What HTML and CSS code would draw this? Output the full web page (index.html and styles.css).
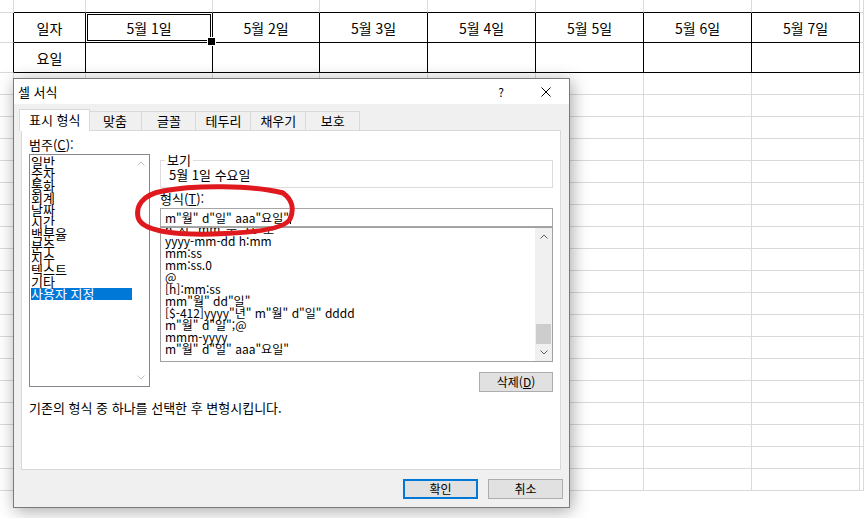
FILE: index.html
```html
<!DOCTYPE html>
<html lang="ko">
<head>
<meta charset="utf-8">
<title>셀 서식</title>
<link rel="stylesheet" href="styles.css">
</head>
<body>
<div class="sheet">
  <span></span><span class="tb"></span><span class="tb"></span><span class="tb"></span><span class="tb"></span><span class="tb"></span><span class="tb"></span><span class="tb"></span><span class="tb"></span><span></span>
  <span class="lb"></span><span class="d">일자</span><span class="d act">5월 1일</span><span class="d">5월 2일</span><span class="d">5월 3일</span><span class="d">5월 4일</span><span class="d">5월 5일</span><span class="d">5월 6일</span><span class="d">5월 7일</span><span></span>
  <span class="lb"></span><span class="d">요일</span><span class="d"></span><span class="d"></span><span class="d"></span><span class="d"></span><span class="d"></span><span class="d"></span><span class="d"></span><span></span>
  <span></span><span></span><span></span><span></span><span></span><span></span><span></span><span></span><span></span><span></span>
  <span></span><span></span><span></span><span></span><span></span><span></span><span></span><span></span><span></span><span></span>
  <span></span><span></span><span></span><span></span><span></span><span></span><span></span><span></span><span></span><span></span>
  <span></span><span></span><span></span><span></span><span></span><span></span><span></span><span></span><span></span><span></span>
  <span></span><span></span><span></span><span></span><span></span><span></span><span></span><span></span><span></span><span></span>
  <span></span><span></span><span></span><span></span><span></span><span></span><span></span><span></span><span></span><span></span>
  <span></span><span></span><span></span><span></span><span></span><span></span><span></span><span></span><span></span><span></span>
  <span></span><span></span><span></span><span></span><span></span><span></span><span></span><span></span><span></span><span></span>
  <span></span><span></span><span></span><span></span><span></span><span></span><span></span><span></span><span></span><span></span>
  <span></span><span></span><span></span><span></span><span></span><span></span><span></span><span></span><span></span><span></span>
  <span></span><span></span><span></span><span></span><span></span><span></span><span></span><span></span><span></span><span></span>
  <span></span><span></span><span></span><span></span><span></span><span></span><span></span><span></span><span></span><span></span>
  <span></span><span></span><span></span><span></span><span></span><span></span><span></span><span></span><span></span><span></span>
  <span></span><span></span><span></span><span></span><span></span><span></span><span></span><span></span><span></span><span></span>
  <span></span><span></span><span></span><span></span><span></span><span></span><span></span><span></span><span></span><span></span>
  <span></span><span></span><span></span><span></span><span></span><span></span><span></span><span></span><span></span><span></span>
  <span></span><span></span><span></span><span></span><span></span><span></span><span></span><span></span><span></span><span></span>
  <span></span><span></span><span></span><span></span><span></span><span></span><span></span><span></span><span></span><span></span>
  <span></span><span></span><span></span><span></span><span></span><span></span><span></span><span></span><span></span><span></span>
</div>

<div class="dialog">
  <div class="titlebar">
    <span class="title">셀 서식</span>
    <span class="help">?</span>
    <span class="close"><svg width="10" height="10" viewBox="0 0 10 10"><path d="M0.5 0.5L9.5 9.5M9.5 0.5L0.5 9.5" stroke="#000" stroke-width="1" fill="none"/></svg></span>
  </div>
  <div class="tabs">
    <span class="tab on">표시 형식</span>
    <span class="tab">맞춤</span>
    <span class="tab">글꼴</span>
    <span class="tab">테두리</span>
    <span class="tab">채우기</span>
    <span class="tab">보호</span>
  </div>
  <div class="panel">
    <div class="left">
      <div class="lbl">범주(<u>C</u>):</div>
      <div class="listbox cat">
        <ul class="items">
          <li>일반</li>
          <li>숫자</li>
          <li>통화</li>
          <li>회계</li>
          <li>날짜</li>
          <li>시간</li>
          <li>백분율</li>
          <li>분수</li>
          <li>지수</li>
          <li>텍스트</li>
          <li>기타</li>
          <li class="sel">사용자 지정</li>
        </ul>
        <div class="vscroll off">
          <span class="arrow"><svg width="8" height="5" viewBox="0 0 8 5"><path d="M0.5 4.5L4 1L7.5 4.5" stroke="currentColor" fill="none"/></svg></span>
          <span class="track"></span>
          <span class="arrow"><svg width="8" height="5" viewBox="0 0 8 5"><path d="M0.5 0.5L4 4L7.5 0.5" stroke="currentColor" fill="none"/></svg></span>
        </div>
      </div>
    </div>
    <div class="right">
      <fieldset class="sample">
        <legend>보기</legend>
        <div class="sample-text">5월 1일 수요일</div>
      </fieldset>
      <div class="lbl fmt-lbl">형식(<u>T</u>):</div>
      <div class="input">m"월" d"일" aaa"요일"<span class="caret"></span></div>
      <div class="listbox fmt">
        <ul class="items">
          <li>h"시" mm"분" ss"초"</li>
          <li>yyyy-mm-dd h:mm</li>
          <li>mm:ss</li>
          <li>mm:ss.0</li>
          <li>@</li>
          <li>[h]:mm:ss</li>
          <li>mm"월" dd"일"</li>
          <li>[$-412]yyyy"년" m"월" d"일" dddd</li>
          <li>m"월" d"일";@</li>
          <li>mmm-yyyy</li>
          <li>m"월" d"일" aaa"요일"</li>
        </ul>
        <div class="vscroll">
          <span class="arrow"><svg width="8" height="5" viewBox="0 0 8 5"><path d="M0.5 4.5L4 1L7.5 4.5" stroke="currentColor" fill="none"/></svg></span>
          <span class="track"><span class="thumb"></span></span>
          <span class="arrow"><svg width="8" height="5" viewBox="0 0 8 5"><path d="M0.5 0.5L4 4L7.5 0.5" stroke="currentColor" fill="none"/></svg></span>
        </div>
      </div>
      <div class="btnrow"><button class="btn">삭제(<u>D</u>)</button></div>
    </div>
    <p class="desc">기존의 형식 중 하나를 선택한 후 변형시킵니다.</p>
  </div>
  <div class="footer">
    <button class="btn default">확인</button>
    <button class="btn">취소</button>
  </div>
</div>

<svg class="mark" width="170" height="60" viewBox="0 0 170 60">
  <path d="M150 10 C120 2 60 2 30 8 C8 12 3 24 5 34 C8 48 40 52 80 51 C120 50 152 46 157 36 C161 27 160 17 150 10" fill="none" stroke="#e0191f" stroke-width="5" stroke-linecap="round"/>
</svg>
</body>
</html>
```
FILE: styles.css
```css
* { box-sizing: border-box; }

html, body {
  margin: 0;
  padding: 0;
}

body {
  width: 864px;
  height: 518px;
  overflow: hidden;
  position: relative;
  background: #fff;
  color: #000;
  font-family: "Noto Sans CJK KR", "Noto Sans", sans-serif;
}

/* ---------- spreadsheet ---------- */
.sheet {
  display: grid;
  grid-template-columns: 14px 72px 127px 107px repeat(5, 108px) 1fr;
  grid-template-rows: 13px 30px 30px;
  grid-auto-rows: 22px;
}

.sheet > span {
  position: relative;
  display: flex;
  align-items: center;
  justify-content: center;
  border-right: 1px solid #dadada;
  border-bottom: 1px solid #dadada;
  font-size: 14px;
  line-height: 1;
}

.sheet > .tb { border-bottom-color: #000; }
.sheet > .lb { border-right-color: #000; }
.sheet > .d { border-right-color: #000; border-bottom-color: #000; }

.sheet > .act::after {
  content: "";
  position: absolute;
  top: 1px;
  left: 1px;
  right: 1px;
  bottom: 1px;
  border: 1px solid #000;
}

.sheet > .act::before {
  content: "";
  position: absolute;
  right: -4px;
  bottom: -4px;
  width: 7px;
  height: 7px;
  background: #000;
  border: 1px solid #fff;
  z-index: 2;
}

/* ---------- dialog ---------- */
.dialog {
  position: absolute;
  left: 13px;
  top: 78px;
  width: 557px;
  height: 430px;
  background: #f0f0f0;
  border: 1px solid #7a7a7a;
  box-shadow: 2px 3px 16px rgba(0, 0, 0, 0.35);
  display: flex;
  flex-direction: column;
  font-size: 13px;
  line-height: 14px;
}

.titlebar {
  height: 25px;
  flex: none;
  background: #fff;
  display: flex;
  align-items: center;
  padding-left: 4px;
}

.title { flex: 1; }

.help {
  width: 12px;
  margin-right: 16px;
  text-align: center;
  font-size: 12px;
}

.close {
  width: 46px;
  height: 25px;
  display: flex;
  align-items: center;
  justify-content: center;
}

.tabs {
  height: 26px;
  flex: none;
  display: flex;
  align-items: flex-end;
  padding-left: 8px;
}

.tab {
  height: 19px;
  min-width: 55px;
  padding: 0 9px;
  margin-left: -1px;
  border: 1px solid #d9d9d9;
  border-bottom: none;
  background: #f0f0f0;
  text-align: center;
  line-height: 17px;
}

.tab.on {
  position: relative;
  z-index: 1;
  height: 22px;
  margin: 0 -2px -1px -3px;
  padding: 0 9px;
  background: #fff;
  line-height: 19px;
}

.panel {
  height: 340px;
  flex: none;
  margin: 0 8px 0 7px;
  background: #fff;
  border: 1px solid #d9d9d9;
  padding: 7px 6px 0 7px;
  display: grid;
  grid-template-columns: 121px 393px;
  grid-template-rows: auto 1fr;
  column-gap: 10px;
  align-content: start;
}

.lbl { height: 14px; }
.lbl u { text-decoration: underline; }

.left .lbl { margin-bottom: 2px; }

.listbox {
  display: flex;
  border: 1px solid #828790;
  background: #fff;
  overflow: hidden;
}

.listbox.cat { height: 233px; }

.items {
  list-style: none;
  margin: 0;
  padding: 1px 0 0 1px;
  flex: 1;
  min-width: 0;
}

.cat .items li {
  font-size: 13px;
  line-height: 12px;
  height: 12px;
  white-space: nowrap;
}

.cat .items li.sel {
  background: #0078d7;
  color: #fff;
}

.vscroll {
  width: 17px;
  flex: none;
  display: flex;
  flex-direction: column;
  background: #f0f0f0;
  color: #606060;
}

.vscroll.off {
  background: #fff;
  color: #c2c2c2;
}

.arrow {
  height: 17px;
  flex: none;
  display: flex;
  align-items: center;
  justify-content: center;
}

.arrow svg { display: block; }

.track {
  flex: 1;
  display: flex;
  flex-direction: column;
  justify-content: flex-end;
  align-items: center;
}

.thumb {
  width: 15px;
  height: 20px;
  background: #cdcdcd;
}

.right { margin-top: 15px; }

.sample {
  margin: 0;
  padding: 1px 8px 3px 8px;
  border: 1px solid #dcdcdc;
  height: 35px;
}

.sample legend {
  padding: 0 2px;
  margin-left: -4px;
  line-height: 14px;
}

.sample-text { line-height: 14px; }

.fmt-lbl { margin-top: 4px; }

.input {
  margin-top: 2px;
  height: 19px;
  border: 1px solid #a6a6a6;
  padding: 0 4px;
  font-size: 12px;
  line-height: 17px;
  display: flex;
  align-items: center;
  white-space: nowrap;
}

.caret {
  width: 1px;
  height: 12px;
  margin-left: 1px;
  background: #000;
}

.listbox.fmt {
  height: 135px;
  border-color: #a0a0a0;
}

.fmt .items {
  padding: 0 0 0 4px;
  margin-top: -5px;
}

.fmt .items li {
  font-size: 12px;
  line-height: 12px;
  height: 12px;
  white-space: nowrap;
}

.btnrow {
  display: flex;
  justify-content: flex-end;
  margin-top: 10px;
}

.btn {
  width: 75px;
  height: 20px;
  padding: 0;
  border: 1px solid #adadad;
  background: #e1e1e1;
  font-family: inherit;
  font-size: 12px;
  line-height: 16px;
  color: #000;
}

.btnrow .btn { width: 74px; }

.btn.default { border: 2px solid #0078d7; }

.desc {
  grid-column: 1 / span 2;
  margin: 9px 0 0 0;
  line-height: 14px;
}

.footer {
  flex: none;
  display: flex;
  justify-content: flex-end;
  gap: 10px;
  padding: 9px 6px 0 0;
}

/* ---------- red annotation ---------- */
.mark {
  position: absolute;
  left: 133px;
  top: 183px;
}
```
